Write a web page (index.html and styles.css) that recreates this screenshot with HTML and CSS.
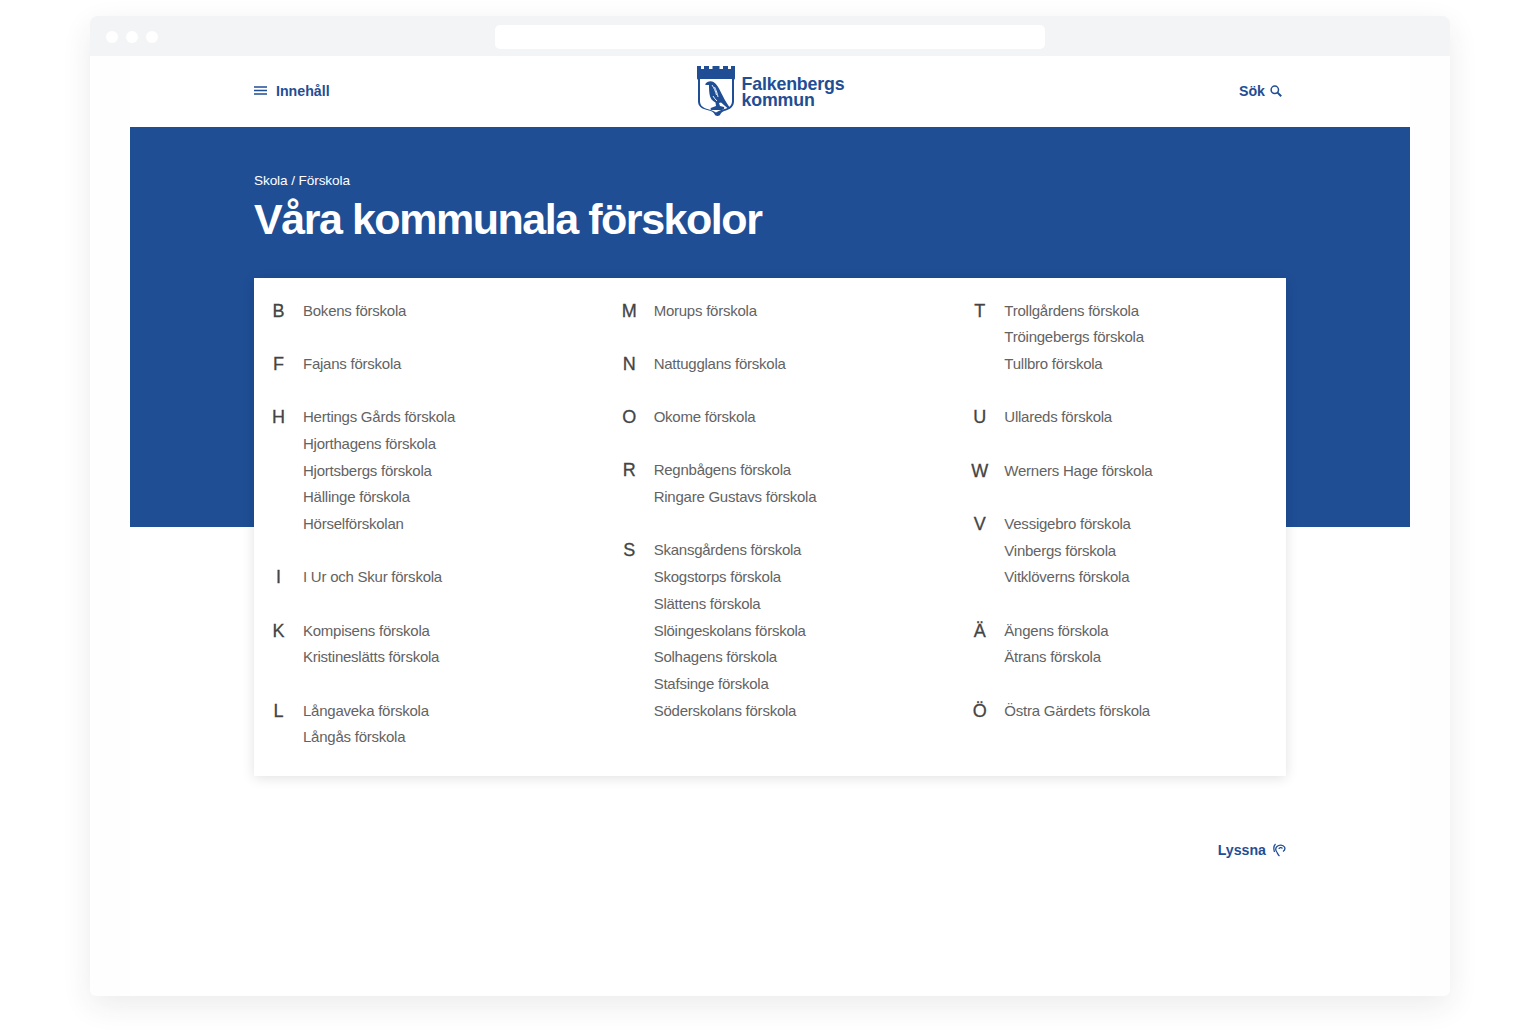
FILE: index.html
```html
<!DOCTYPE html>
<html lang="sv">
<head>
<meta charset="utf-8">
<title>Våra kommunala förskolor</title>
<link rel="stylesheet" href="styles.css">
</head>
<body>
<div class="window">
  <div class="chrome">
    <div class="dots"><span class="dot"></span><span class="dot"></span><span class="dot"></span></div>
    <div class="address"></div>
  </div>
  <div class="page">
    <header class="header">
      <a class="link link-left">
        <svg class="icon-menu" viewBox="0 0 13 9" width="13" height="9"><path d="M0 1h13M0 4.500h13M0 8h13" stroke="#1f4e95" stroke-width="1.700" fill="none"/></svg>
        <span>Innehåll</span>
      </a>
      <div class="logo">
        <svg class="shield" viewBox="0 1 38 52" width="38" height="52">
          <path fill="#1f4e95" d="M0 1h4v3h3V1h5v3h3.500V1h7v3h3.500V1h5v3h3V1h4v12.500l-1 1.500v21c0 5-3 8-8 9.500-2.500.8-4.500 1.500-5.500 3.500-.3 1-1.500 2-3 2s-2.700-1-3-2c-1-2-3-2.700-5.500-3.500C4 44 1 41 1 36V15L0 13.500z"/>
          <path fill="#fff" d="M3 14h32v22c0 4-2.500 6.500-6.500 7.700-3.500 1-6.500 1.800-9.500 3.800-3-2-6-2.800-9.500-3.800C5.500 42.500 3 40 3 36z"/>
          <path fill="#1f4e95" d="M8 19.500C10 16 14 15.500 16.500 17c3 2 5.500 6 7.500 10.500 2 4 5 10 9 15.500l-2 .5c-3-2.500-5-4.500-7-6l-2 .5 1 3 4 1c1 2-1 3-3 3h-9c-2 0-2-2 0-2.500l4-1.500-.5-3.500c-3.500-1.500-5.500-4.500-6-8.500-.5-4-.5-7-.5-9h-2.500z"/>
          <path fill="none" stroke="#fff" stroke-width=".9" d="M15 20c2 3 3.500 6 4.500 10M17.500 22c1.500 3 3 7 3.500 10M16 31c1 2 2.500 3.500 4 5"/>
        </svg>
        <div class="logo-text">Falkenbergs<br>kommun</div>
      </div>
      <a class="link link-right">
        <span>Sök</span>
        <svg class="icon-search" viewBox="0 0 12 12" width="12" height="12"><circle cx="4.800" cy="4.800" r="3.700" stroke="#1f4e95" stroke-width="1.500" fill="none"/><path d="M7.600 7.600l3.600 3.600" stroke="#1f4e95" stroke-width="2" fill="none"/></svg>
      </a>
    </header>
    <section class="hero">
      <div class="breadcrumb">Skola / Förskola</div>
      <h1 class="title">Våra kommunala förskolor</h1>
    </section>
    <main class="card">
      <div class="column">
        <div class="group"><div class="letter">B</div><ul class="names"><li>Bokens förskola</li></ul></div>
        <div class="group"><div class="letter">F</div><ul class="names"><li>Fajans förskola</li></ul></div>
        <div class="group"><div class="letter">H</div><ul class="names"><li>Hertings Gårds förskola</li><li>Hjorthagens förskola</li><li>Hjortsbergs förskola</li><li>Hällinge förskola</li><li>Hörselförskolan</li></ul></div>
        <div class="group"><div class="letter">I</div><ul class="names"><li>I Ur och Skur förskola</li></ul></div>
        <div class="group"><div class="letter">K</div><ul class="names"><li>Kompisens förskola</li><li>Kristineslätts förskola</li></ul></div>
        <div class="group"><div class="letter">L</div><ul class="names"><li>Långaveka förskola</li><li>Långås förskola</li></ul></div>
      </div>
      <div class="column">
        <div class="group"><div class="letter">M</div><ul class="names"><li>Morups förskola</li></ul></div>
        <div class="group"><div class="letter">N</div><ul class="names"><li>Nattugglans förskola</li></ul></div>
        <div class="group"><div class="letter">O</div><ul class="names"><li>Okome förskola</li></ul></div>
        <div class="group"><div class="letter">R</div><ul class="names"><li>Regnbågens förskola</li><li>Ringare Gustavs förskola</li></ul></div>
        <div class="group"><div class="letter">S</div><ul class="names"><li>Skansgårdens förskola</li><li>Skogstorps förskola</li><li>Slättens förskola</li><li>Slöingeskolans förskola</li><li>Solhagens förskola</li><li>Stafsinge förskola</li><li>Söderskolans förskola</li></ul></div>
      </div>
      <div class="column">
        <div class="group"><div class="letter">T</div><ul class="names"><li>Trollgårdens förskola</li><li>Tröingebergs förskola</li><li>Tullbro förskola</li></ul></div>
        <div class="group"><div class="letter">U</div><ul class="names"><li>Ullareds förskola</li></ul></div>
        <div class="group"><div class="letter">W</div><ul class="names"><li>Werners Hage förskola</li></ul></div>
        <div class="group"><div class="letter">V</div><ul class="names"><li>Vessigebro förskola</li><li>Vinbergs förskola</li><li>Vitklöverns förskola</li></ul></div>
        <div class="group"><div class="letter">Ä</div><ul class="names"><li>Ängens förskola</li><li>Ätrans förskola</li></ul></div>
        <div class="group"><div class="letter">Ö</div><ul class="names"><li>Östra Gärdets förskola</li></ul></div>
      </div>
    </main>
    <div class="listen">
      <a class="link">
        <span>Lyssna</span>
        <svg class="icon-ear" viewBox="0 0 13 14" width="13" height="14" fill="none" stroke="#1f4e95" stroke-width="1.300"><path d="M6.500 13C5 12 4.500 10 3.500 8.500 2.500 7 2.500 5 4 3.500c2-2 6-2 7.500.5 1 2 0 3.500-1.500 4.500"/><path d="M6 6c0-1.500 2.500-2 3.500-.5"/><path d="M2.500 1C.5 3 .5 6 1.500 9"/></svg>
      </a>
    </div>
  </div>
</div>
</body>
</html>
```
FILE: styles.css
```css
* { box-sizing: border-box; }
html, body { margin: 0; padding: 0; }
body {
  width: 1540px;
  height: 1030px;
  padding: 16px 90px 34px;
  background: #fff;
  overflow: hidden;
  font-family: "Liberation Sans", Arial, sans-serif;
}
.window {
  height: 980px;
  border-radius: 8px 8px 6px 6px;
  background: #fefeff;
  box-shadow: 0 10px 30px rgba(40, 45, 60, .09);
  display: flex;
  flex-direction: column;
}
.chrome {
  height: 40px;
  flex: none;
  background: #f3f4f6;
  border-radius: 8px 8px 0 0;
  display: flex;
  align-items: center;
  position: relative;
  padding: 2px 0 0 16px;
}
.dots { display: flex; gap: 8px; }
.dot { width: 12px; height: 12px; border-radius: 50%; background: #fff; }
.address {
  position: absolute;
  left: 405px;
  top: 9px;
  width: 550px;
  height: 24px;
  border-radius: 5px;
  background: #fff;
}
.page {
  margin: 0 40px;
  flex: 1;
  background: #fff;
  display: flex;
  flex-direction: column;
}
.header {
  height: 71px;
  flex: none;
  padding: 0 128px 0 124px;
  display: grid;
  grid-template-columns: 1fr auto 1fr;
  align-items: center;
}
.link {
  display: inline-flex;
  align-items: center;
  color: #1f4e95;
  font-size: 14.200px;
  font-weight: 700;
}
.link-left { gap: 9px; justify-self: start; margin-bottom: 2px; }
.link-right { gap: 5px; justify-self: end; margin-bottom: 2px; }
.logo { display: flex; align-items: center; gap: 6px; margin-left: 6px; }
.shield { display: block; }
.logo-text {
  color: #1f4e95;
  font-size: 17.800px;
  font-weight: 700;
  line-height: 16px;
  letter-spacing: -.15px;
}
.hero {
  height: 400px;
  flex: none;
  background: #1f4e95;
  color: #fff;
  padding: 45px 124px 0;
}
.breadcrumb { font-size: 13.600px; line-height: 18px; letter-spacing: -.1px; }
.title {
  margin: 4px 0 0;
  font-size: 43px;
  line-height: 50px;
  font-weight: 700;
  letter-spacing: -1.46px;
}
.card {
  margin: -249px 124px 0;
  padding: 19.500px 16px 25.500px;
  background: #fff;
  box-shadow: 0 2px 12px rgba(0, 0, 0, .12);
  display: grid;
  grid-template-columns: repeat(3, 1fr);
  column-gap: 52px;
  position: relative;
}
.column { display: flex; flex-direction: column; gap: 26.667px; }
.group { display: flex; line-height: 26.667px; }
.letter {
  width: 17px;
  flex: none;
  margin-right: 16px;
  font-size: 18px;
  color: #444;
  text-align: center;
  -webkit-text-stroke: .3px #444;
}
.names {
  list-style: none;
  margin: 0;
  padding: 0;
  font-size: 15px;
  letter-spacing: -.24px;
  color: #636363;
}
.listen {
  display: flex;
  justify-content: flex-end;
  padding: 66px 124px 0 0;
}
.listen .link { gap: 7px; }
```
